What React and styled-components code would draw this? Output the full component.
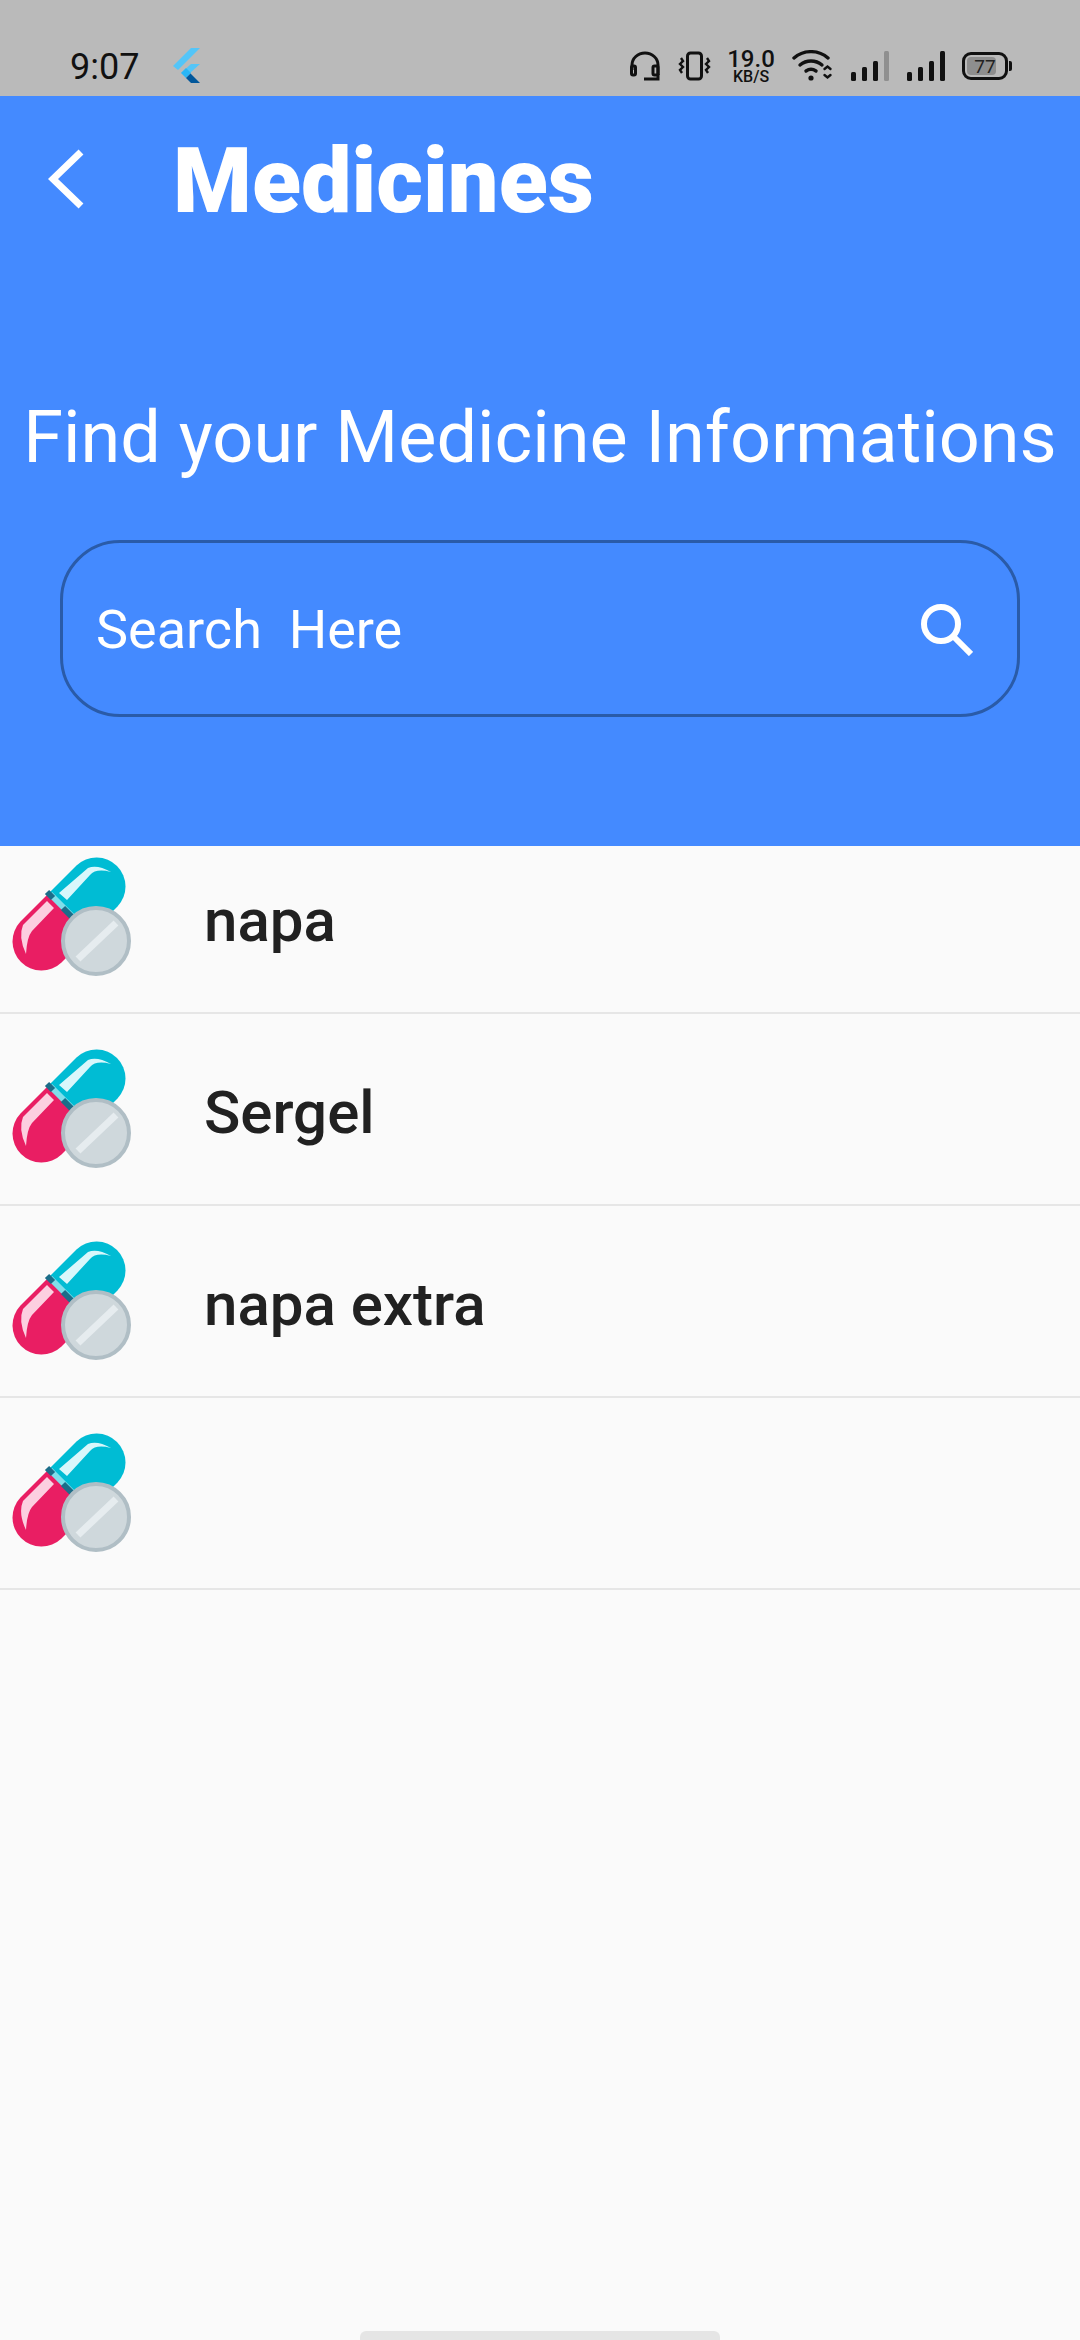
import styled, { createGlobalStyle } from "styled-components";

const GlobalStyle = createGlobalStyle`
  html, body {
    margin: 0;
    padding: 0;
    background: #fafafa;
    font-family: Roboto, "Noto Sans", sans-serif;
  }
`;

const medicines = ["napa", "Sergel", "napa extra", ""];

const FlutterLogo = () => (
  <svg width="27" height="35" viewBox="0 0 27 35">
    <path d="M0 18 L18 0 H27 L5 22 Z" fill="#54c5f8" />
    <path d="M8 25 L18 16 H27 L17 25 Z" fill="#54c5f8" />
    <path d="M8 25 L13 20 L18 25 L13 30 Z" fill="#29b6f6" />
    <path d="M13 30 L17.5 25.5 L27 35 H18 Z" fill="#01579b" />
  </svg>
);

const Headphones = () => (
  <svg width="30" height="30" viewBox="0 0 30 30" fill="none" stroke="#111" strokeWidth="3">
    <path d="M2 19 V14 A13 12 0 0 1 28 14 V24" />
    <rect x="1.5" y="15" width="4" height="9" rx="1.5" />
    <rect x="23" y="15" width="5" height="9" rx="1.5" />
    <path d="M14 28 H28 V23" />
  </svg>
);

const Vibrate = () => (
  <svg width="33" height="30" viewBox="0 0 33 30" fill="none" stroke="#111" strokeWidth="2.4">
    <rect x="9.5" y="2" width="14" height="26" rx="3" strokeWidth="3" />
    <path d="M3 7 L5 10 L2 13 L5 16 L2 19 L4 22" />
    <path d="M29 7 L31 10 L28 13 L31 16 L28 19 L30 22" />
  </svg>
);

const Wifi = () => (
  <svg width="42" height="32" viewBox="0 0 42 32" fill="none" stroke="#111" strokeWidth="3.4" strokeLinecap="round">
    <path d="M2 8 A26 26 0 0 1 36 8" />
    <path d="M8 15 A17 17 0 0 1 30 15" />
    <path d="M14 21 A9 9 0 0 1 24 21" />
    <circle cx="19" cy="28" r="2.6" fill="#111" stroke="none" />
    <path d="M32.500 19 L35.500 16.500 L38.500 19" strokeWidth="2.4" />
    <path d="M32.500 25 L35.500 27.500 L38.500 25" strokeWidth="2.4" />
  </svg>
);

const Signal = ({ faded }) => (
  <svg width="38" height="30" viewBox="0 0 38 30">
    <rect x="0" y="21" width="5" height="9" rx="1.500" fill="#111" />
    <rect x="11" y="16" width="5" height="14" rx="1.500" fill="#111" />
    <rect x="22" y="10" width="5" height="20" rx="1.500" fill="#111" />
    <rect x="33" y="0" width="5" height="30" rx="1.500" fill={faded ? "#8f8f8f" : "#111"} />
  </svg>
);

const Pills = () => (
  <svg width="120" height="120" viewBox="0 0 120 120">
    <path d="M36.500 36.500 L64.500 8.500 A29 29 0 0 1 105.500 49.500 L77.500 77.500 Z" fill="#00bcd4" />
    <path d="M36.500 36.500 L8.500 64.500 A29 29 0 0 0 49.500 105.500 L77.500 77.500 Z" fill="#e91e63" />
    <path d="M47 36 L76 11 Q85 7 99 15 Q84 11 78 18 L55 43 Z" fill="#d9f7fb" />
    <path d="M35 44 L11 68 Q6 80 14 97 Q15 80 20 74 L42 51 Z" fill="#fccfe0" />
    <path d="M38 37 L62 61" stroke="#80deea" strokeWidth="6" />
    <path d="M35 35 L41 41" stroke="#1b6d89" strokeWidth="6" />
    <path d="M51 51 L60 60" stroke="#1b6d89" strokeWidth="6" />
    <circle cx="84" cy="84" r="33" fill="#cfd8dc" stroke="#b0bec5" strokeWidth="4" />
    <path d="M66 102 L104 66" stroke="#e6ecef" strokeWidth="7" />
  </svg>
);

export default function App() {
  return (
    <Page>
      <GlobalStyle />
      <StatusBar>
        <Time>9:07</Time>
        <FlutterSlot>
          <FlutterLogo />
        </FlutterSlot>
        <StatusIcons>
          <Headphones />
          <Vibrate />
          <Speed>
            <b>19.0</b>
            <span>KB/S</span>
          </Speed>
          <Wifi />
          <Signal faded />
          <Signal />
          <Battery>
            <BatteryFill />
            <BatteryLevel>77</BatteryLevel>
          </Battery>
        </StatusIcons>
      </StatusBar>

      <Header>
        <TopRow>
          <BackIcon viewBox="0 0 36 60">
            <path d="M33 3 L5 30 L33 57" />
          </BackIcon>
          <Title>Medicines</Title>
        </TopRow>
        <Subtitle>Find your Medicine Informations</Subtitle>
        <SearchBox>
          <SearchText>Search&nbsp; Here</SearchText>
          <SearchIcon viewBox="0 0 52 52">
            <circle cx="20" cy="20" r="17" />
            <path d="M32 32 L50 50" />
          </SearchIcon>
        </SearchBox>
      </Header>

      <ListViewport>
        <List>
          {medicines.map((name, i) => (
            <Row key={i}>
              <Pills />
              <RowName>{name}</RowName>
            </Row>
          ))}
        </List>
      </ListViewport>

      <HomeBar />
    </Page>
  );
}

const Page = styled.div`
  position: relative;
  width: 1080px;
  height: 2340px;
  overflow: hidden;
  background: #fafafa;
`;

const StatusBar = styled.div`
  height: 96px;
  box-sizing: border-box;
  padding: 46px 72px 0 70px;
  background: #bababa;
  display: flex;
  align-items: flex-start;
`;

const Time = styled.div`
  width: 103px;
  font-size: 36px;
  line-height: 42px;
  font-weight: 400;
  color: #111;
`;

const FlutterSlot = styled.div`
  margin-top: 2px;
  display: flex;
`;

const StatusIcons = styled.div`
  margin-left: auto;
  margin-top: 5px;
  display: flex;
  align-items: center;
  gap: 17.5px;
  height: 30px;
`;

const Speed = styled.div`
  width: 46px;
  display: flex;
  flex-direction: column;
  align-items: center;
  color: #111;
  line-height: 1;

  b {
    font-size: 24px;
    font-weight: 500;
    line-height: 20px;
  }
  span {
    font-size: 16px;
    font-weight: 500;
    line-height: 15px;
  }
`;

const Battery = styled.div`
  position: relative;
  width: 46px;
  height: 28px;
  box-sizing: border-box;
  border: 3px solid #111;
  border-radius: 9px;
  display: flex;
  align-items: center;
  justify-content: center;

  &::after {
    content: "";
    position: absolute;
    right: -7px;
    top: 6px;
    width: 3px;
    height: 10px;
    background: #111;
    border-radius: 0 2px 2px 0;
  }
`;

const BatteryFill = styled.div`
  position: absolute;
  left: 2px;
  top: 2px;
  bottom: 2px;
  width: 29px;
  background: #8e8e8e;
  border-radius: 4px;
`;

const BatteryLevel = styled.span`
  position: relative;
  font-size: 19px;
  font-weight: 400;
  color: #222;
`;

const Header = styled.div`
  height: 750px;
  box-sizing: border-box;
  background: #448aff;
  padding-top: 28px;
`;

const TopRow = styled.div`
  display: flex;
  align-items: center;
  height: 110px;
  padding-left: 48px;
`;

const BackIcon = styled.svg`
  width: 36px;
  height: 60px;
  fill: none;
  stroke: #fff;
  stroke-width: 7;
`;

const Title = styled.h1`
  margin: 6px 0 0 89px;
  font-size: 90px;
  line-height: 110px;
  font-weight: 900;
  color: #fff;
`;

const Subtitle = styled.div`
  margin-top: 162px;
  text-align: center;
  font-size: 72px;
  line-height: 84px;
  font-weight: 400;
  color: #fff;
  white-space: nowrap;
`;

const SearchBox = styled.div`
  margin: 60px 60px 0;
  height: 177px;
  box-sizing: border-box;
  padding: 2px 44px 0 33px;
  border: 3px solid #2a5ba8;
  border-radius: 60px;
  display: flex;
  align-items: center;
  justify-content: space-between;
`;

const SearchText = styled.span`
  font-size: 54px;
  color: #fff;
`;

const SearchIcon = styled.svg`
  width: 52px;
  height: 52px;
  fill: none;
  stroke: #fff;
  stroke-width: 6;
`;

const ListViewport = styled.div`
  overflow: hidden;
`;

const List = styled.div`
  margin-top: -24px;
  display: flex;
  flex-direction: column;
`;

const Row = styled.div`
  height: 192px;
  box-sizing: border-box;
  border-bottom: 2px solid #e6e6e6;
  padding-left: 12px;
  display: flex;
  align-items: center;
`;

const RowName = styled.div`
  margin: 8px 0 0 72px;
  font-size: 60px;
  line-height: 76px;
  font-weight: 500;
  color: #212121;
`;

const HomeBar = styled.div`
  position: absolute;
  left: 360px;
  bottom: 0;
  width: 360px;
  height: 9px;
  background: #e5e5e5;
  border-radius: 6px 6px 0 0;
`;
